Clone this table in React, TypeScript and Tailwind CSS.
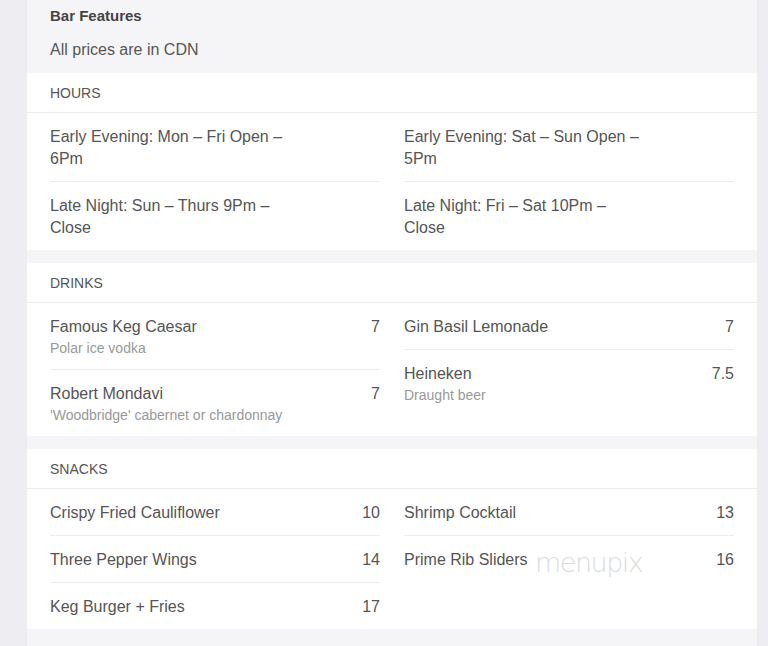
import React from 'react';

type Item = { name: string; desc?: string; price?: string };

const hoursLeft: Item[] = [
    { name: 'Early Evening: Mon – Fri Open – 6Pm' },
    { name: 'Late Night: Sun – Thurs 9Pm – Close' },
];
const hoursRight: Item[] = [
    { name: 'Early Evening: Sat – Sun Open – 5Pm' },
    { name: 'Late Night: Fri – Sat 10Pm – Close' },
];
const drinksLeft: Item[] = [
    { name: 'Famous Keg Caesar', desc: 'Polar ice vodka', price: '7' },
    { name: 'Robert Mondavi', desc: "'Woodbridge' cabernet or chardonnay", price: '7' },
];
const drinksRight: Item[] = [
    { name: 'Gin Basil Lemonade', price: '7' },
    { name: 'Heineken', desc: 'Draught beer', price: '7.5' },
];
const snacksLeft: Item[] = [
    { name: 'Crispy Fried Cauliflower', price: '10' },
    { name: 'Three Pepper Wings', price: '14' },
    { name: 'Keg Burger + Fries', price: '17' },
];
const snacksRight: Item[] = [
    { name: 'Shrimp Cocktail', price: '13' },
    { name: 'Prime Rib Sliders', price: '16' },
];

const Column: React.FC<{ items: Item[] }> = ({ items }) => (
    <div className="flex flex-col">
        {items.map((item, i) => (
            <div
                key={item.name}
                className={`flex justify-between pt-[13px] pb-[11px] ${i < items.length - 1 ? 'border-b border-[#ececec]' : ''}`}
            >
                <div className="max-w-[240px]">
                    <div className="text-[16px] leading-[22px] text-[#555]">{item.name}</div>
                    {item.desc && (
                        <div className="text-[14px] leading-[20px] text-[#999]">{item.desc}</div>
                    )}
                </div>
                {item.price && (
                    <div className="text-[16px] leading-[22px] text-[#555]">{item.price}</div>
                )}
            </div>
        ))}
    </div>
);

const Section: React.FC<{ title: string; left: Item[]; right: Item[] }> = ({ title, left, right }) => (
    <div className="bg-white">
        <div className="border-b border-[#ececec] px-[23px] pt-[10px] pb-[9px] text-[14px] leading-[20px] text-[#555]">
            {title}
        </div>
        <div className="grid grid-cols-2 gap-x-6 px-[23px]">
            <Column items={left} />
            <Column items={right} />
        </div>
    </div>
);

const App: React.FC = () => {
    return (
        <div className="h-screen overflow-hidden bg-[#ededf2] font-['Liberation_Sans',Arial,sans-serif]">
            <div className="relative ml-[27px] mr-[11px] h-full bg-[#f5f5f7]">
                {/* Header */}
                <div className="px-[23px] pt-[5px] pb-3">
                    <div className="text-[15px] leading-[22px] font-bold text-[#444]">Bar Features</div>
                    <div className="mt-3 text-[16px] leading-[22px] text-[#555]">All prices are in CDN</div>
                </div>

                <div className="flex flex-col gap-[13px]">
                    <Section title="HOURS" left={hoursLeft} right={hoursRight} />
                    <Section title="DRINKS" left={drinksLeft} right={drinksRight} />
                    <Section title="SNACKS" left={snacksLeft} right={snacksRight} />
                </div>

                {/* watermark */}
                <div className="pointer-events-none absolute left-[508px] top-[543px] text-[27px] font-extralight tracking-[-1.5px] text-[#dcdcdc] font-['DejaVu_Sans',sans-serif]">
                    menupix
                </div>
            </div>
        </div>
    );
};

export default App;
